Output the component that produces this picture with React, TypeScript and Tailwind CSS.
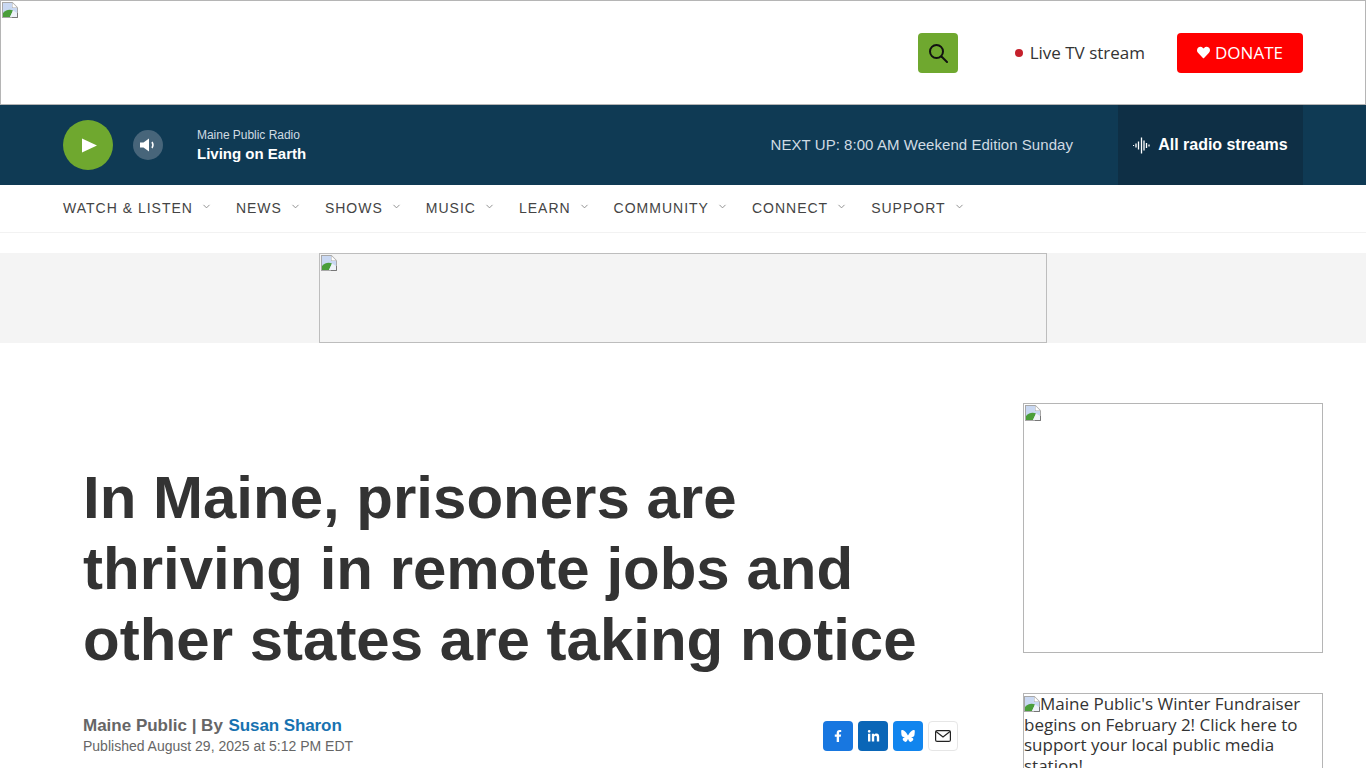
import { ChevronDown } from "lucide-react";
import { FaFacebookF, FaLinkedinIn, FaHeart } from "react-icons/fa";

const navItems = ["WATCH & LISTEN", "NEWS", "SHOWS", "MUSIC", "LEARN", "COMMUNITY", "CONNECT", "SUPPORT"];

function BrokenImage() {
  return (
    <svg width="16" height="16" viewBox="0 0 16 16" className="shrink-0">
      <path d="M0 0H10.5L16 5.5V16H0Z" fill="#a8a8a8" />
      <path d="M1 1H10V6H15V15H1Z" fill="#c9d8f2" />
      <path d="M10.5 1L15 5.5H10.5Z" fill="#fff" />
      <path d="M1 15V11C4 7.5 8 7 11 8.5L8 15Z" fill="#4a9e3a" />
      <path d="M8 15L11 8.5L15 11V15Z" fill="#eef2f8" />
      <path d="M15.5 11V15.5H10" fill="none" stroke="#777" />
    </svg>
  );
}

function Waveform() {
  return (
    <svg width="18" height="17" viewBox="0 0 18 17" fill="none" stroke="#fff" strokeWidth="1.3">
      <path d="M0.5 8V9M3 6.5V10.5M5.5 4.5V12.5M8.5 0.5V16.5M11 3.5V13.5M13.5 6V11M16 7.5V9.5" />
    </svg>
  );
}

function Bluesky() {
  return (
    <svg width="14" height="12" viewBox="0 0 568 501" fill="#fff">
      <path d="M123 33c65 49 135 148 161 201 26-53 96-152 161-201 47-35 123-62 123 24 0 17-10 144-16 165-20 72-94 90-159 79 114 19 143 84 80 149-119 123-171-31-184-70-3-7-4-11-5-8 0-3-2 1-5 8-13 39-65 193-184 70-63-65-34-130 80-149-65 11-139-7-159-79C10 201 0 74 0 57c0-86 76-59 123-24z" />
    </svg>
  );
}

export default function App() {
  return (
    <div className="h-screen overflow-hidden bg-white font-['Liberation_Sans',sans-serif] text-[#333]">
      <header className="flex h-[105px] items-center justify-between border border-[#b5b5b5] pr-[62px]">
        <div className="self-start pl-px pt-px">
          <BrokenImage />
        </div>
        <div className="flex items-center">
          <button className="flex h-10 w-10 items-center justify-center rounded bg-[#6fa82f]">
            <svg width="20" height="20" viewBox="0 0 20 20" fill="none" stroke="#111" strokeWidth="2">
              <circle cx="8.5" cy="8.5" r="6.5" />
              <path d="M13.5 13.5L19 19" strokeLinecap="round" />
            </svg>
          </button>
          <div className="ml-[57px] flex items-center font-['Open_Sans',sans-serif] text-[17px] text-[#333]">
            <span className="mr-[7px] h-2 w-2 rounded-full bg-[#c5202c]" />
            Live TV stream
          </div>
          <button className="ml-8 flex h-10 w-[126px] items-center justify-center gap-[5px] rounded bg-[#ff0000] font-['Open_Sans',sans-serif] text-[17px] text-white">
            <FaHeart size={13} />
            DONATE
          </button>
        </div>
      </header>

      <div className="flex h-20 items-center bg-[#0f3a54] px-[63px]">
        <button className="flex h-[50px] w-[50px] items-center justify-center rounded-full bg-[#6fa82f]">
          <svg width="15" height="15" viewBox="0 0 15 15" fill="#fff" className="ml-0.5">
            <path d="M0 0.5L15 7.5L0 14.5Z" />
          </svg>
        </button>
        <button className="ml-5 flex h-[30px] w-[30px] items-center justify-center rounded-full bg-[#47657a]">
          <svg width="16" height="14" viewBox="0 0 16 14" fill="none">
            <path d="M0 4.5H3.5L9 0.5V13.5L3.5 9.5H0Z" fill="#fff" />
            <path d="M12 4C13.2 5.8 13.2 8.2 12 10" stroke="#fff" strokeWidth="1.5" />
          </svg>
        </button>
        <div className="ml-[34px]">
          <div className="text-xs leading-[15px] tracking-[-0.03px] text-[#cfdbe3]">Maine Public Radio</div>
          <div className="mt-[2px] text-[15px] font-bold leading-[18px] text-white">Living on Earth</div>
        </div>
        <div className="ml-auto mr-[45px] text-[15px] tracking-[0.05px] text-[#cfdbe3]">NEXT UP: 8:00 AM Weekend Edition Sunday</div>
        <div className="flex h-full w-[185px] items-center justify-center gap-[7px] bg-[#0e2f45] text-base font-bold tracking-[-0.03px] text-white">
          <Waveform />
          All radio streams
        </div>
      </div>

      <nav className="flex h-[48px] items-center border-b border-[#f2f2f2] pb-[2px] pl-[63px]">
        {navItems.map((item) => (
          <div key={item} className="mr-[24px] flex items-center text-sm tracking-[1px] text-[#444]">
            {item}
            <ChevronDown size={11} className="relative top-[-1px] ml-[8px] text-[#888]" />
          </div>
        ))}
      </nav>

      <div className="mt-5 flex h-[90px] justify-center bg-[#f4f4f4]">
        <div className="h-[90px] w-[728px] border border-[#bdbdbd] pl-px pt-px">
          <BrokenImage />
        </div>
      </div>

      <main className="flex justify-between pl-[83px] pr-[43px] pt-[60px]">
        <div className="w-[875px] pt-[59px]">
          <h1 className="text-[60px] font-bold leading-[71px] text-[#333]">
            In Maine, prisoners are
            <br />
            thriving in remote jobs and
            <br />
            other states are taking notice
          </h1>
          <div className="mt-[41px] flex items-center justify-between">
            <div>
              <div className="text-[17px] font-bold leading-5 text-[#666]">
                Maine Public | By <span className="ml-px tracking-[-0.1px] text-[#1772b0]">Susan Sharon</span>
              </div>
              <div className="text-sm leading-[20px] text-[#666]">Published August 29, 2025 at 5:12 PM EDT</div>
            </div>
            <div className="flex gap-[5px]">
              <div className="flex h-[30px] w-[30px] items-center justify-center rounded-sm bg-[#1877e0] text-white">
                <FaFacebookF size={12} />
              </div>
              <div className="flex h-[30px] w-[30px] items-center justify-center rounded-sm bg-[#0a66b7] text-white">
                <FaLinkedinIn size={13} />
              </div>
              <div className="flex h-[30px] w-[30px] items-center justify-center rounded-sm bg-[#1185ee]">
                <Bluesky />
              </div>
              <div className="flex h-[30px] w-[30px] items-center justify-center rounded-sm border border-[#e6e6e6] bg-white">
                <svg width="16" height="12" viewBox="0 0 16 12" fill="none" stroke="#222" strokeWidth="1.2">
                  <rect x="0.6" y="0.6" width="14.8" height="10.8" rx="1.5" />
                  <path d="M1 1.5L8 7L15 1.5" />
                </svg>
              </div>
            </div>
          </div>
        </div>

        <aside className="w-[300px]">
          <div className="h-[250px] border border-[#b5b5b5] pl-px pt-px">
            <BrokenImage />
          </div>
          <div className="mt-10 border border-[#b5b5b5] font-['Open_Sans',sans-serif] text-[17px] leading-[20.7px] text-[#333]">
            <span className="inline-block align-[-2px]">
              <BrokenImage />
            </span>
            Maine Public's Winter Fundraiser begins on February 2! Click here to support your local public media station!
          </div>
        </aside>
      </main>
    </div>
  );
}
